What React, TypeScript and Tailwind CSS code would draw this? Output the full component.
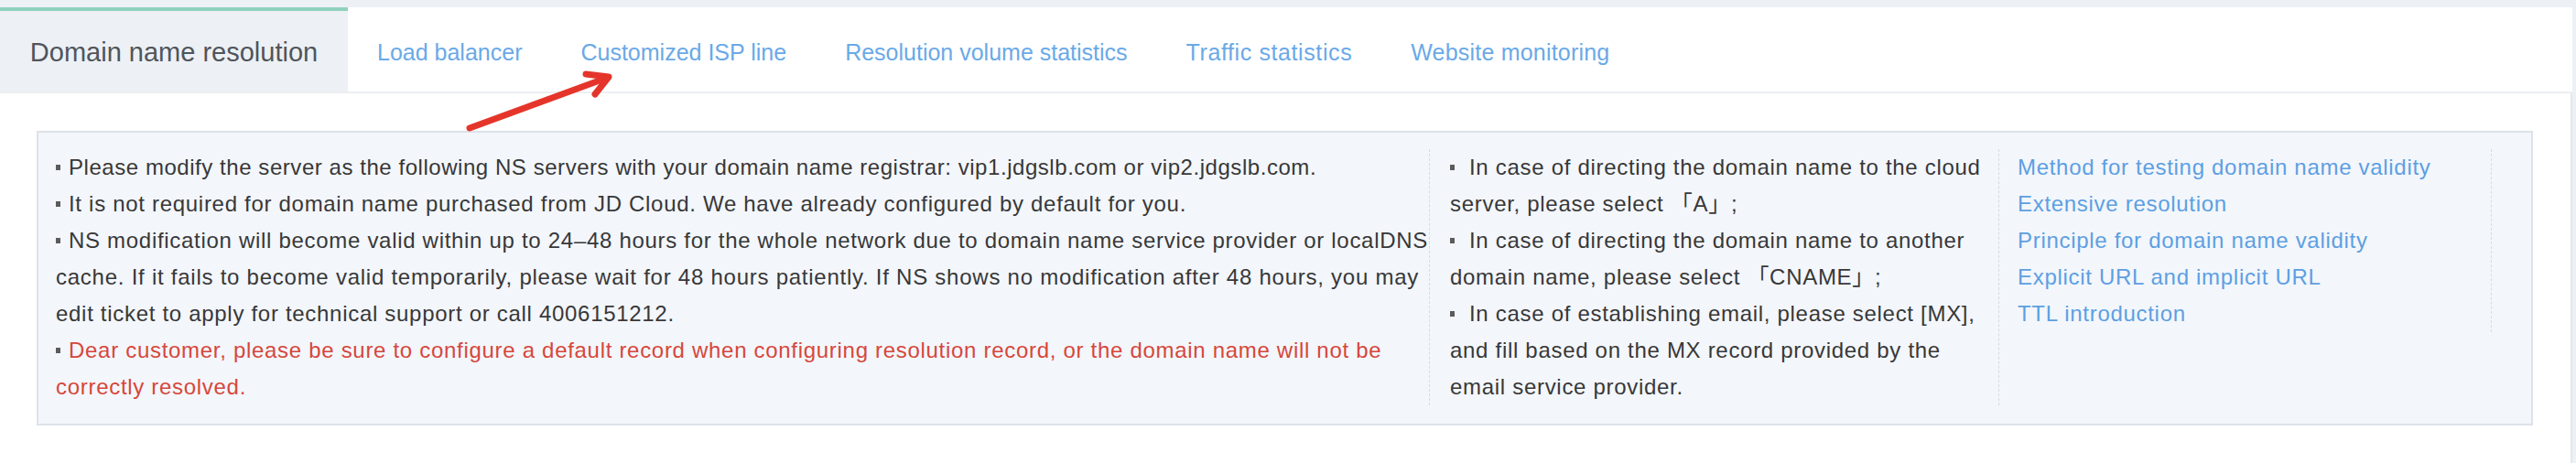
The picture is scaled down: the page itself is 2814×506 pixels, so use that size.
import React from "react";

const tabs = [
  { label: "Load balancer", cls: "" },
  { label: "Customized ISP line", cls: "" },
  { label: "Resolution volume statistics", cls: "" },
  { label: "Traffic statistics", cls: "tracking-[0.6px]" },
  { label: "Website monitoring", cls: "tracking-[0.2px]" },
];

const links = [
  "Method for testing domain name validity",
  "Extensive resolution",
  "Principle for domain name validity",
  "Explicit URL and implicit URL",
  "TTL introduction",
];

function Dot({ wide }: { wide?: boolean }) {
  return (
    <span
      className={
        "inline-block w-[5px] h-[6px] bg-[#5b5b5b] align-middle mb-[3px] " +
        (wide ? "mr-[16px]" : "mr-[9px]")
      }
    />
  );
}

export default function App() {
  return (
    <div className="relative w-[2814px] h-[506px] bg-[#edf0f4] pt-[8px] font-['Liberation_Sans','Noto_Sans_CJK_SC',Arial,sans-serif]">
      <div className="w-[2810px] h-[498px] bg-white flex flex-col">
        {/* Tabs */}
        <div className="flex h-[94px] border-b-2 border-[#eceef2]">
          <div className="w-[380px] h-[92px] bg-[#edf0f4] border-t-4 border-[#8fd1bc] flex items-center justify-center pt-[3px] text-[29px] text-[#50555c]">
            Domain name resolution
          </div>
          {tabs.map((t) => (
            <div
              key={t.label}
              className={
                "px-[32px] h-[92px] flex items-center pt-[7px] text-[25px] text-[#6aa9e7] " +
                t.cls
              }
            >
              {t.label}
            </div>
          ))}
        </div>

        {/* Content */}
        <div className="flex-1 border-r-2 border-[#e3e6eb] pt-[41px] pl-[40px]">
          <div className="w-[2727px] border-2 border-[#dde2e9] bg-[#f3f6fb] pt-[18px] pb-[20px] pl-[19px] flex text-[24px] leading-[40px] tracking-[0.7px] text-[#383838] whitespace-nowrap">
            <div className="w-[1501px] border-r border-dashed border-[#d6dbe2]">
              <div className="tracking-[0.55px]"><Dot />Please modify the server as the following NS servers with your domain name registrar: vip1.jdgslb.com or vip2.jdgslb.com.</div>
              <div><Dot />It is not required for domain name purchased from JD Cloud. We have already configured by default for you.</div>
              <div><Dot />NS modification will become valid within up to 24–48 hours for the whole network due to domain name service provider or localDNS</div>
              <div className="tracking-[0.75px]">cache. If it fails to become valid temporarily, please wait for 48 hours patiently. If NS shows no modification after 48 hours, you may</div>
              <div>edit ticket to apply for technical support or call 4006151212.</div>
              <div><Dot /><span className="text-[#d6473b]">Dear customer, please be sure to configure a default record when configuring resolution record, or the domain name will not be</span></div>
              <div className="text-[#d6473b]">correctly resolved.</div>
            </div>
            <div className="w-[622px] pl-[22px] border-r border-dashed border-[#d6dbe2]">
              <div><Dot wide />In case of directing the domain name to the cloud</div>
              <div>server, please select 「A」;</div>
              <div><Dot wide />In case of directing the domain name to another</div>
              <div>domain name, please select 「CNAME」;</div>
              <div><Dot wide />In case of establishing email, please select [MX],</div>
              <div>and fill based on the MX record provided by the</div>
              <div>email service provider.</div>
            </div>
            <div className="self-start w-[538px] pl-[20px] border-r border-dashed border-[#d6dbe2] text-[#5d9fe2]">
              {links.map((l) => (
                <div key={l}>{l}</div>
              ))}
            </div>
          </div>
        </div>
      </div>

      {/* Red arrow annotation */}
      <svg
        className="absolute left-[500px] top-[70px]"
        width="180"
        height="80"
        viewBox="0 0 180 80"
      >
        <g stroke="#e5352b" strokeWidth="7" strokeLinecap="round" strokeLinejoin="round" fill="none">
          <line x1="13" y1="70" x2="163" y2="15" />
          <polyline points="140,11 165,14 150,33" />
        </g>
      </svg>
    </div>
  );
}
